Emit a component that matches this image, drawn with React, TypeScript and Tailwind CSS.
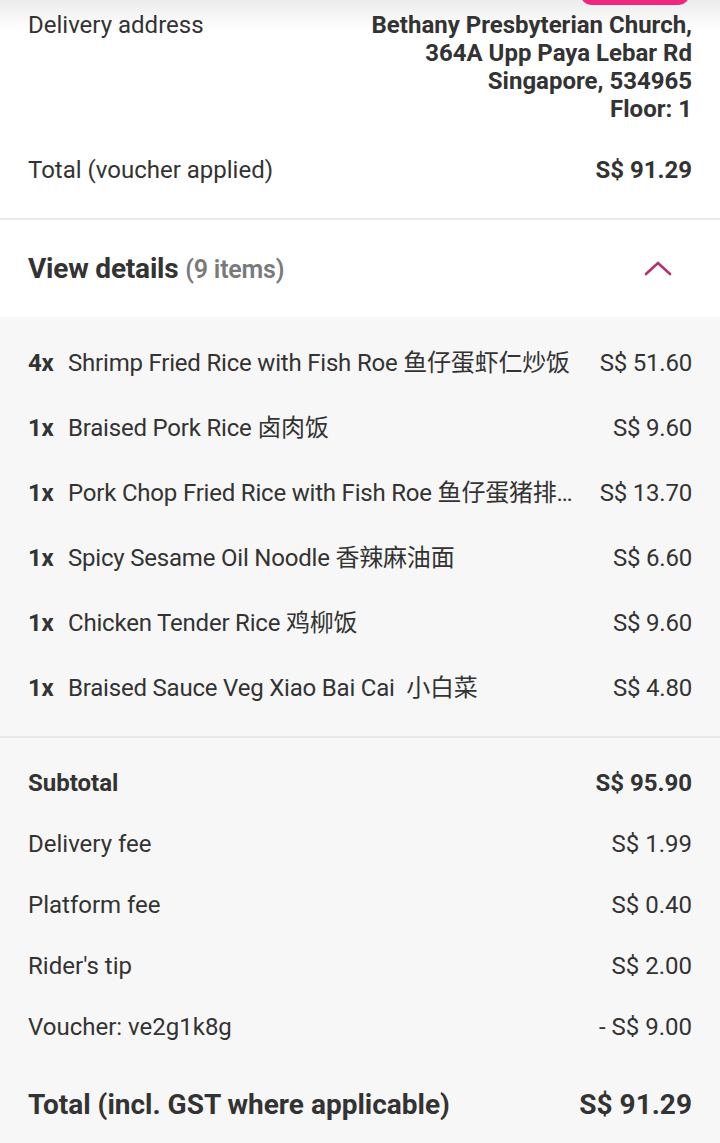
import React from 'react';

interface Item {
  qty: number;
  name: string;
  price: string;
}

const items: Item[] = [
  { qty: 4, name: 'Shrimp Fried Rice with Fish Roe 鱼仔蛋虾仁炒饭', price: 'S$ 51.60' },
  { qty: 1, name: 'Braised Pork Rice 卤肉饭', price: 'S$ 9.60' },
  { qty: 1, name: 'Pork Chop Fried Rice with Fish Roe 鱼仔蛋猪排炒饭', price: 'S$ 13.70' },
  { qty: 1, name: 'Spicy Sesame Oil Noodle 香辣麻油面', price: 'S$ 6.60' },
  { qty: 1, name: 'Chicken Tender Rice 鸡柳饭', price: 'S$ 9.60' },
  { qty: 1, name: 'Braised Sauce Veg Xiao Bai Cai\u00a0 小白菜', price: 'S$ 4.80' },
];

const fees = [
  { label: 'Delivery fee', value: 'S$ 1.99' },
  { label: 'Platform fee', value: 'S$ 0.40' },
  { label: "Rider's tip", value: 'S$ 2.00' },
  { label: 'Voucher: ve2g1k8g', value: '- S$ 9.00' },
];

export default function App() {
  return (
    <div
      className="relative w-[720px] h-[1143px] overflow-hidden bg-white text-[#333333]"
      style={{ fontFamily: 'Roboto, "Noto Sans CJK SC", sans-serif' }}
    >
      {/* top shadow + cut-off pill */}
      <div className="absolute top-0 left-0 right-0 h-[30px] bg-gradient-to-b from-[#ececec] to-white" />
      <div className="absolute top-[-30px] left-[581px] w-[108px] h-[35px] rounded-[10px] bg-[#f0277f]" />

      <div className="relative px-[28px] pt-[11px]">
        <div className="flex justify-between">
          <div className="text-[24px] leading-[28px]">Delivery address</div>
          <div className="text-right text-[24px] leading-[28px] font-bold">
            <div>Bethany Presbyterian Church,</div>
            <div>364A Upp Paya Lebar Rd</div>
            <div>Singapore, 534965</div>
            <div>Floor: 1</div>
          </div>
        </div>
        <div className="flex justify-between items-center mt-[33px] pb-[34px] text-[24px] leading-[28px]">
          <span>Total (voucher applied)</span>
          <span className="font-bold">S$ 91.29</span>
        </div>
      </div>

      <div className="h-[2px] bg-[#e8e8e8]" />

      <div className="h-[97px] px-[28px] flex items-center justify-between">
        <div className="text-[28px] font-bold tracking-[-0.2px]">
          View details <span className="text-[25px] font-semibold text-[#7a7a7a]">(9 items)</span>
        </div>
        <svg width="28" height="20" viewBox="0 0 28 20" className="mr-[20px] -mt-[2px]">
          <path d="M2 16 L14 5 L26 16" fill="none" stroke="#b4316f" strokeWidth="2.6" strokeLinecap="round" />
        </svg>
      </div>

      <div className="bg-[#f7f7f7]">
        <div className="pt-[13px] pb-[16px] px-[28px]">
          {items.map((item, i) => (
            <div key={i} className="h-[65px] flex items-center text-[24px] tracking-[-0.2px]">
              <span className="w-[40px] shrink-0 font-bold">{item.qty}x</span>
              <span className="flex-1 min-w-0 truncate pr-[18px]">{item.name}</span>
              <span className="shrink-0">{item.price}</span>
            </div>
          ))}
        </div>

        <div className="h-[2px] bg-[#e8e8e8]" />

        <div className="px-[28px] pt-[14px]">
          <div className="h-[61px] flex items-center justify-between text-[24px] font-bold">
            <span>Subtotal</span>
            <span>S$ 95.90</span>
          </div>
          {fees.map(f => (
            <div key={f.label} className="h-[61px] flex items-center justify-between text-[24px]">
              <span>{f.label}</span>
              <span>{f.value}</span>
            </div>
          ))}
          <div className="h-[96px] flex items-center justify-between text-[28px] font-bold">
            <span>Total (incl. GST where applicable)</span>
            <span>S$ 91.29</span>
          </div>
        </div>
      </div>
    </div>
  );
}
